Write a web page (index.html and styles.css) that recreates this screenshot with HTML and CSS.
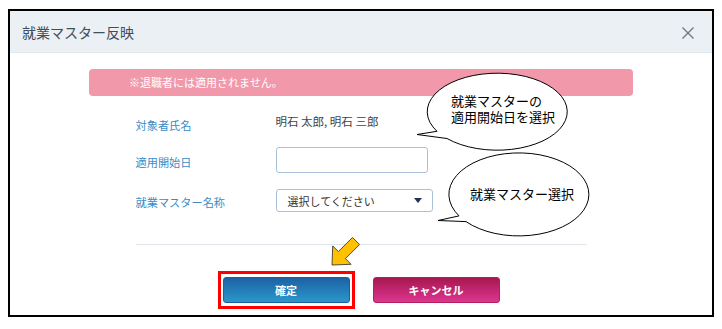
FILE: index.html
```html
<!DOCTYPE html>
<html lang="ja">
<head>
  <meta charset="UTF-8">
  <meta name="viewport" content="width=device-width, initial-scale=1.0">
  <title>就業マスター反映</title>
  <link rel="stylesheet" href="styles.css">
</head>
<body>
  <div class="page">
    <div class="dialog">
      <div class="dialog-header">
        <span class="dialog-title">就業マスター反映</span>
        <svg class="close" width="12" height="12" viewBox="0 0 12 12">
          <path d="M0.5 0.5 L11.5 11.5 M11.5 0.5 L0.5 11.5" stroke="#6b7b8b" stroke-width="1.4" fill="none"/>
        </svg>
      </div>

      <div class="notice">※退職者には適用されません。</div>

      <div class="form">
        <div class="row row-first">
          <div class="label">対象者氏名</div>
          <div class="valor">明石 太郎, 明石 三郎</div>
        </div>
        <div class="row row-date">
          <div class="label">適用開始日</div>
          <input type="text" class="campo">
        </div>
        <div class="row row-select">
          <div class="label">就業マスター名称</div>
          <div class="select">
            <span>選択してください</span>
            <span class="caret"></span>
          </div>
        </div>

        <div class="divisor"></div>

        <div class="botoes">
          <span class="destaque">
            <button class="btn btn-ok">確定</button>
          </span>
          <button class="btn btn-cancel">キャンセル</button>
        </div>
      </div>
    </div>

    <!-- anotações por cima da tela -->
    <svg class="anotacoes" width="722" height="329" viewBox="0 0 722 329">
      <path d="M437 131.3 L417 134.5 L447 138.5 A70 38.5 0 1 0 437 131.3 Z" fill="#fff" stroke="#000" stroke-width="1"/>
      <path d="M459 215.9 L438 220.5 L466 221.6 A70 41.5 0 1 0 459 215.9 Z" fill="#fff" stroke="#000" stroke-width="1"/>
      <g transform="translate(332 265) rotate(45)">
        <polygon points="0,0 -13,-14 -5,-14 -5,-34 5,-34 5,-14 13,-14" fill="#ffc000" stroke="#333" stroke-width="0.8" stroke-linejoin="miter"/>
      </g>
    </svg>
    <div class="balao balao-1">
      <div>就業マスターの</div>
      <div>適用開始日を選択</div>
    </div>
    <div class="balao balao-2">就業マスター選択</div>
  </div>
</body>
</html>
```

FILE: styles.css
```css
body {
  margin: 0;
  background-color: #fff;
  font-family: "Noto Sans CJK JP", "Noto Sans", sans-serif;
}
.page {
  position: relative;
  width: 722px;
  height: 329px;
  overflow: hidden;
}
.dialog {
  box-sizing: border-box;
  width: 706px;
  height: 308px;
  margin: 9px 0 0 8px;
  border: 2px solid #000;
  background-color: #fff;
}
.dialog-header {
  display: flex;
  align-items: center;
  justify-content: space-between;
  height: 41px;
  padding: 0 18px 0 12px;
  background-color: #ebf0f5;
  border-bottom: 1px solid #e0e7ed;
}
.dialog-title {
  font-size: 14px;
  line-height: 18px;
  color: #3f4d5c;
}
.close {
  display: block;
  margin-top: 2px;
}
.notice {
  height: 27px;
  margin: 16px 79px 0;
  padding-left: 40px;
  border-radius: 4px;
  background-color: #f199aa;
  color: #fff;
  font-size: 11px;
  line-height: 27px;
}
.form {
  width: 451px;
  margin: 14px auto 0;
}
.row {
  display: flex;
  align-items: center;
}
.row-first {
  height: 26px;
}
.row-date {
  height: 26px;
  margin-top: 11px;
}
.row-select {
  height: 23px;
  margin-top: 16px;
}
.label {
  width: 140px;
  padding-top: 3px;
  font-size: 11.2px;
  line-height: 16px;
  color: #3a8cc6;
}
.valor {
  padding-bottom: 4px;
  font-size: 11.5px;
  line-height: 16px;
  color: #444;
}
.campo {
  box-sizing: border-box;
  width: 152px;
  height: 26px;
  margin: 0;
  border: 1px solid #a9c2d9;
  border-radius: 3px;
  background-color: #fff;
}
.select {
  box-sizing: border-box;
  display: flex;
  align-items: center;
  justify-content: space-between;
  width: 157px;
  height: 23px;
  padding: 0 10px 0 11px;
  border: 1px solid #a9c2d9;
  border-radius: 3px;
  font-size: 11px;
  color: #333;
}
.caret {
  width: 0;
  height: 0;
  border-left: 4.5px solid transparent;
  border-right: 4.5px solid transparent;
  border-top: 5px solid #1d3557;
}
.divisor {
  margin-top: 32px;
  border-top: 1px solid #dfe5ea;
}
.botoes {
  display: flex;
  justify-content: center;
  gap: 23px;
  margin-top: 32px;
}
.destaque {
  position: relative;
  display: block;
}
.destaque::after {
  content: "";
  position: absolute;
  top: -6px;
  bottom: -6px;
  left: -5px;
  right: -5px;
  border: 3px solid #f00;
}
.btn {
  display: block;
  width: 127px;
  height: 26px;
  margin: 0;
  padding: 0;
  border-radius: 3px;
  color: #fff;
  font-family: "Noto Sans CJK JP", sans-serif;
  font-size: 11px;
  font-weight: bold;
  cursor: pointer;
}
.btn-ok {
  border: 1px solid #1b5f9c;
  background: linear-gradient(#1c62a5, #2b97ca);
}
.btn-cancel {
  border: 1px solid #b11f5c;
  background: linear-gradient(#a8174f, #dc3690);
}
.anotacoes {
  position: absolute;
  top: 0;
  left: 0;
}
.balao {
  position: absolute;
  font-family: "Liberation Sans", "Noto Sans CJK JP", sans-serif;
  font-size: 13px;
  line-height: 16px;
  color: #000;
}
.balao-1 {
  left: 451px;
  top: 94px;
}
.balao-2 {
  left: 470px;
  top: 187px;
}
```
